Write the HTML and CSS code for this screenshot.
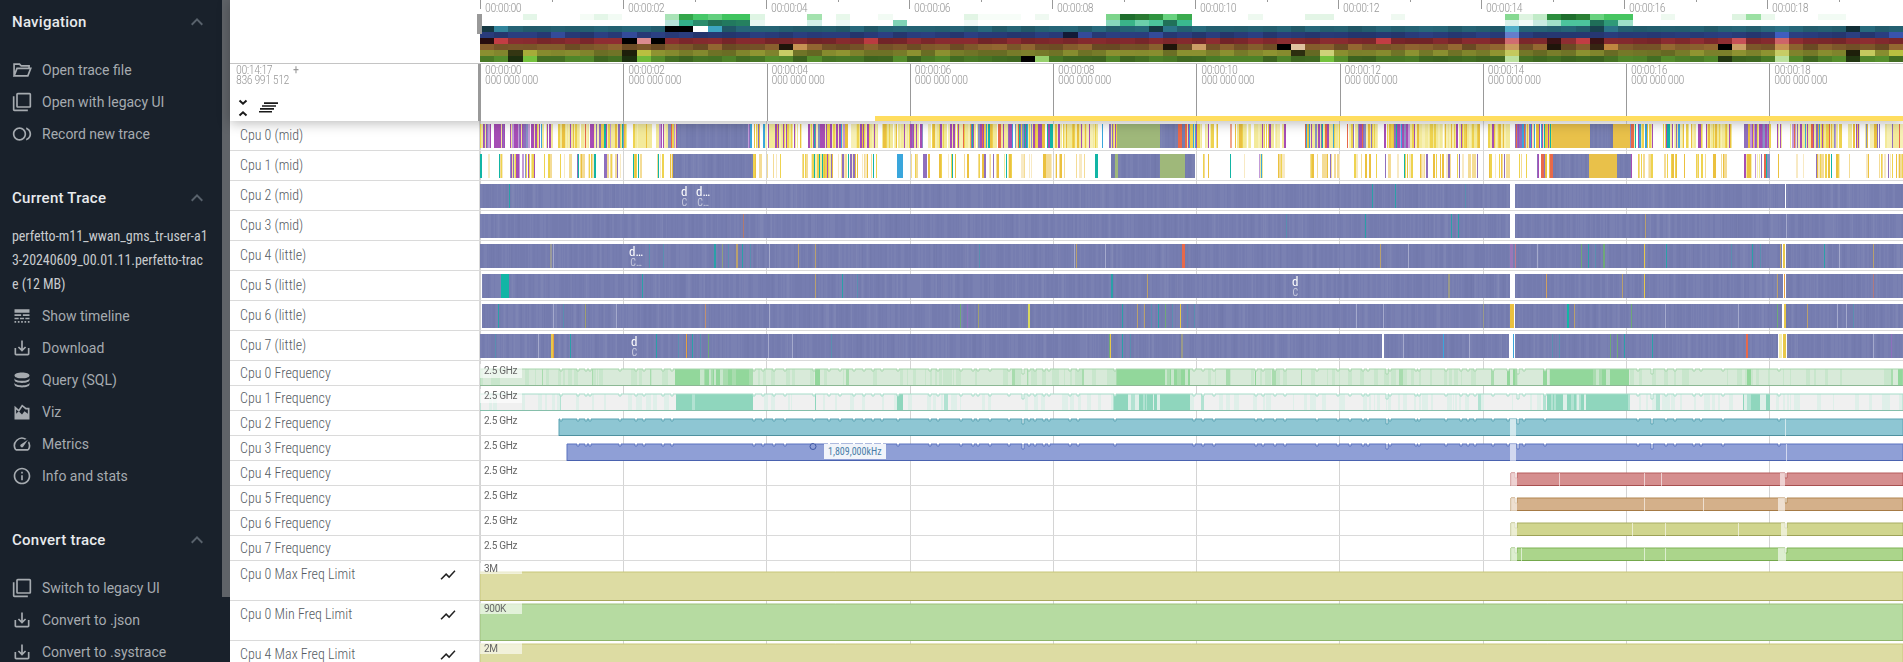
FILE: index.html
```html
<!DOCTYPE html>
<html lang="en">

<head>
    <meta charset="UTF-8">
    <title>Perfetto UI</title>
    <link rel="stylesheet" href="styles.css">
</head>

<body>
    <aside class="sidebar">
        <section class="nav-section">
            <header class="nav-head">
                <h1>Navigation</h1>
                <svg class="chevron" viewBox="0 0 24 24"><path d="M12 8l-6 6 1.41 1.41L12 10.83l4.59 4.58L18 14z"/></svg>
            </header>
            <ul class="nav-items">
                <li><svg class="icon" viewBox="0 0 24 24"><path class="line" d="M2.5 19V5h6.5l2 2h9.500v3M2.500 19l3.500-9h16.500l-3.500 9z"/></svg><span>Open trace file</span></li>
                <li><svg class="icon" viewBox="0 0 24 24"><path d="M3 5H1v16c0 1.100.9 2 2 2h16v-2H3V5zm18-4H7c-1.100 0-2 .9-2 2v14c0 1.100.9 2 2 2h14c1.100 0 2-.9 2-2V3c0-1.100-.9-2-2-2zm0 16H7V3h14v14z"/></svg><span>Open with legacy UI</span></li>
                <li><svg class="icon" viewBox="0 0 24 24"><path d="M9 4c-4.420 0-8 3.580-8 8s3.580 8 8 8 8-3.580 8-8-3.580-8-8-8zm0 14c-3.310 0-6-2.690-6-6s2.690-6 6-6 6 2.690 6 6-2.690 6-6 6zm8-13.740v2.090c2.330.82 4 3.040 4 5.650s-1.670 4.830-4 5.650v2.090c3.450-.89 6-4.010 6-7.740s-2.550-6.850-6-7.740z"/></svg><span>Record new trace</span></li>
            </ul>
        </section>

        <section class="nav-section">
            <header class="nav-head">
                <h1>Current Trace</h1>
                <svg class="chevron" viewBox="0 0 24 24"><path d="M12 8l-6 6 1.41 1.41L12 10.83l4.59 4.58L18 14z"/></svg>
            </header>
            <div class="trace-title">perfetto-m11_wwan_gms_tr-user-a1<br>3-20240609_00.01.11.perfetto-trac<br>e (12 MB)</div>
            <ul class="nav-items">
                <li><svg class="icon" viewBox="0 0 24 24"><path d="M3 16h5v-2H3v2zm6.500 0h5v-2h-5v2zm6.500 0h5v-2h-5v2zM3 20h2v-2H3v2zm4 0h2v-2H7v2zm4 0h2v-2h-2v2zm4 0h2v-2h-2v2zm4 0h2v-2h-2v2zM3 12h8v-2H3v2zm10 0h8v-2h-8v2zM3 4v4h18V4H3z"/></svg><span>Show timeline</span></li>
                <li><svg class="icon" viewBox="0 0 24 24"><path d="M19 12v7H5v-7H3v7c0 1.100.9 2 2 2h14c1.100 0 2-.9 2-2v-7h-2zm-6 .67l2.590-2.580L17 11.500l-5 5-5-5 1.410-1.410L11 12.670V3h2z"/></svg><span>Download</span></li>
                <li><svg class="icon" viewBox="0 0 24 24"><path d="M12 3c-5 0-9 1.500-9 3.500S7 10 12 10s9-1.500 9-3.500S17 3 12 3zM3 9.500V12c0 2 4 3.500 9 3.500s9-1.500 9-3.500V9.500c0 2-4 3.500-9 3.500s-9-1.500-9-3.500zM3 15v2.500C3 19.500 7 21 12 21s9-1.500 9-3.500V15c0 2-4 3.500-9 3.500S3 17 3 15z"/></svg><span>Query (SQL)</span></li>
                <li><svg class="icon" viewBox="0 0 24 24"><path fill-rule="evenodd" d="M3 21V4.500l5 4.500 4-6 5 4h4v14zM5 9v5l3-3 4 4 3-4 4 3V9h-2.700L12.500 5.800 8.400 12z"/></svg><span>Viz</span></li>
                <li><svg class="icon" viewBox="0 0 24 24"><path d="M20.380 8.570l-1.230 1.850a8 8 0 0 1-.22 7.580H5.070A8 8 0 0 1 15.580 6.850l1.850-1.230A10 10 0 0 0 3.350 19a2 2 0 0 0 1.720 1h13.850a2 2 0 0 0 1.740-1 10 10 0 0 0-.27-10.440zM10.590 15.410a2 2 0 0 0 2.830 0l5.660-8.490-8.490 5.660a2 2 0 0 0 0 2.830z"/></svg><span>Metrics</span></li>
                <li><svg class="icon" viewBox="0 0 24 24"><path d="M11 7h2v2h-2zm0 4h2v6h-2zm1-9C6.480 2 2 6.480 2 12s4.480 10 10 10 10-4.480 10-10S17.520 2 12 2zm0 18c-4.410 0-8-3.590-8-8s3.590-8 8-8 8 3.590 8 8-3.590 8-8 8z"/></svg><span>Info and stats</span></li>
            </ul>
        </section>

        <section class="nav-section">
            <header class="nav-head">
                <h1>Convert trace</h1>
                <svg class="chevron" viewBox="0 0 24 24"><path d="M12 8l-6 6 1.41 1.41L12 10.83l4.59 4.58L18 14z"/></svg>
            </header>
            <ul class="nav-items">
                <li><svg class="icon" viewBox="0 0 24 24"><path d="M3 5H1v16c0 1.100.9 2 2 2h16v-2H3V5zm18-4H7c-1.100 0-2 .9-2 2v14c0 1.100.9 2 2 2h14c1.100 0 2-.9 2-2V3c0-1.100-.9-2-2-2zm0 16H7V3h14v14z"/></svg><span>Switch to legacy UI</span></li>
                <li><svg class="icon" viewBox="0 0 24 24"><path d="M19 12v7H5v-7H3v7c0 1.100.9 2 2 2h14c1.100 0 2-.9 2-2v-7h-2zm-6 .67l2.590-2.580L17 11.500l-5 5-5-5 1.410-1.410L11 12.670V3h2z"/></svg><span>Convert to .json</span></li>
                <li><svg class="icon" viewBox="0 0 24 24"><path d="M19 12v7H5v-7H3v7c0 1.100.9 2 2 2h14c1.100 0 2-.9 2-2v-7h-2zm-6 .67l2.590-2.580L17 11.500l-5 5-5-5 1.410-1.410L11 12.670V3h2z"/></svg><span>Convert to .systrace</span></li>
            </ul>
        </section>
    </aside>

    <div class="sidebar-scroll"><div class="sidebar-thumb"></div></div>

    <main class="viewer">
        <div class="topbar">
            <div class="overview">
                <div class="corner"></div>
                <div class="overview-body">
                    <div class="overview-handle"></div>
                    <div class="overview-ticks">
                        <div class="overview-tick">00:00:00</div>
                        <div class="overview-tick">00:00:02</div>
                        <div class="overview-tick">00:00:04</div>
                        <div class="overview-tick">00:00:06</div>
                        <div class="overview-tick">00:00:08</div>
                        <div class="overview-tick">00:00:10</div>
                        <div class="overview-tick">00:00:12</div>
                        <div class="overview-tick">00:00:14</div>
                        <div class="overview-tick">00:00:16</div>
                        <div class="overview-tick">00:00:18</div>
                    </div>
                    <canvas id="heatmap" class="heatmap"></canvas>
                </div>
            </div>
            <div class="timeline">
                <div class="time-left">
                    <div class="offset-row">
                        <div class="time-text">00:14:17<br>836 991 512</div>
                        <div class="offset-plus">+</div>
                    </div>
                    <div class="time-tools">
                        <svg class="tool-collapse" viewBox="0 0 10 18"><path d="M1.500 1.500L5 4.700l3.500-3.200M1.500 16.500L5 13.300l3.500 3.200"/></svg>
                        <svg class="tool-list" viewBox="0 0 19 11"><path d="M5 1.100h14M3 4h14M1 6.900h14M0 9.800h13"/></svg>
                    </div>
                </div>
                <div class="time-ticks">
                    <div class="time-tick">00:00:00<br>000 000 000</div>
                    <div class="time-tick">00:00:02<br>000 000 000</div>
                    <div class="time-tick">00:00:04<br>000 000 000</div>
                    <div class="time-tick">00:00:06<br>000 000 000</div>
                    <div class="time-tick">00:00:08<br>000 000 000</div>
                    <div class="time-tick">00:00:10<br>000 000 000</div>
                    <div class="time-tick">00:00:12<br>000 000 000</div>
                    <div class="time-tick">00:00:14<br>000 000 000</div>
                    <div class="time-tick">00:00:16<br>000 000 000</div>
                    <div class="time-tick">00:00:18<br>000 000 000</div>
                    <div class="selection-bar"></div>
                </div>
            </div>
        </div>

        <div class="tracks">
            <div class="track cpu"><div class="track-name">Cpu 0 (mid)</div><div class="track-body"><canvas data-track="cpu0"></canvas></div></div>
            <div class="track cpu"><div class="track-name">Cpu 1 (mid)</div><div class="track-body"><canvas data-track="cpu1"></canvas></div></div>
            <div class="track cpu"><div class="track-name">Cpu 2 (mid)</div><div class="track-body"><canvas data-track="cpu2"></canvas></div></div>
            <div class="track cpu"><div class="track-name">Cpu 3 (mid)</div><div class="track-body"><canvas data-track="cpu3"></canvas></div></div>
            <div class="track cpu"><div class="track-name">Cpu 4 (little)</div><div class="track-body"><canvas data-track="cpu4"></canvas></div></div>
            <div class="track cpu"><div class="track-name">Cpu 5 (little)</div><div class="track-body"><canvas data-track="cpu5"></canvas></div></div>
            <div class="track cpu"><div class="track-name">Cpu 6 (little)</div><div class="track-body"><canvas data-track="cpu6"></canvas></div></div>
            <div class="track cpu"><div class="track-name">Cpu 7 (little)</div><div class="track-body"><canvas data-track="cpu7"></canvas></div></div>

            <div class="track freq"><div class="track-name">Cpu 0 Frequency</div><div class="track-body"><canvas data-track="freq0"></canvas><div class="counter-label boxed">2.5 GHz</div></div></div>
            <div class="track freq"><div class="track-name">Cpu 1 Frequency</div><div class="track-body"><canvas data-track="freq1"></canvas><div class="counter-label boxed">2.5 GHz</div></div></div>
            <div class="track freq"><div class="track-name">Cpu 2 Frequency</div><div class="track-body"><canvas data-track="freq2"></canvas><div class="counter-label">2.5 GHz</div></div></div>
            <div class="track freq"><div class="track-name">Cpu 3 Frequency</div><div class="track-body"><canvas data-track="freq3"></canvas><div class="counter-label">2.5 GHz</div><div class="freq-tooltip">1,809,000kHz</div></div></div>
            <div class="track freq"><div class="track-name">Cpu 4 Frequency</div><div class="track-body"><canvas data-track="freq4"></canvas><div class="counter-label">2.5 GHz</div></div></div>
            <div class="track freq"><div class="track-name">Cpu 5 Frequency</div><div class="track-body"><canvas data-track="freq5"></canvas><div class="counter-label">2.5 GHz</div></div></div>
            <div class="track freq"><div class="track-name">Cpu 6 Frequency</div><div class="track-body"><canvas data-track="freq6"></canvas><div class="counter-label">2.5 GHz</div></div></div>
            <div class="track freq"><div class="track-name">Cpu 7 Frequency</div><div class="track-body"><canvas data-track="freq7"></canvas><div class="counter-label">2.5 GHz</div></div></div>

            <div class="track limit"><div class="track-name"><span>Cpu 0 Max Freq Limit</span><svg class="chart-icon" viewBox="0 0 24 24"><path d="M3.500 18.490l6-6.010 4 4L22 6.920l-1.410-1.410-7.090 7.970-4-4L2 16.990z"/></svg></div><div class="track-body"><canvas data-track="limit0"></canvas><div class="counter-label limit-label">3M</div></div></div>
            <div class="track limit"><div class="track-name"><span>Cpu 0 Min Freq Limit</span><svg class="chart-icon" viewBox="0 0 24 24"><path d="M3.500 18.490l6-6.010 4 4L22 6.920l-1.410-1.410-7.090 7.970-4-4L2 16.990z"/></svg></div><div class="track-body"><canvas data-track="limit1"></canvas><div class="counter-label limit-label">900K</div></div></div>
            <div class="track limit"><div class="track-name"><span>Cpu 4 Max Freq Limit</span><svg class="chart-icon" viewBox="0 0 24 24"><path d="M3.500 18.490l6-6.010 4 4L22 6.920l-1.410-1.410-7.090 7.970-4-4L2 16.990z"/></svg></div><div class="track-body"><canvas data-track="limit2"></canvas><div class="counter-label limit-label">2M</div></div></div>
        </div>
    </main>

    <script src="tracks.js"></script>
</body>

</html>
```

FILE: styles.css
```css
html,
body {
    margin: 0;
    padding: 0;
    height: 100%;
    overflow: hidden;
    font-family: Roboto, sans-serif;
}

body {
    display: flex;
    background-color: white;
}

/* sidebar */

.sidebar {
    width: 222px;
    flex: none;
    overflow: hidden;
    background-color: #19212b;
    color: #a6abb0;
    font-size: 14px;
}

.nav-section {
    margin-bottom: 26px;
}

.nav-head {
    height: 44px;
    padding: 0 13px 0 12px;
    display: flex;
    align-items: center;
    justify-content: space-between;
}

.nav-head h1 {
    margin: 0;
    font-size: 15px;
    font-weight: 500;
    letter-spacing: 0.25px;
    color: #e8eaed;
}

.chevron {
    width: 24px;
    height: 24px;
    fill: #59626c;
}

.nav-items {
    list-style: none;
    margin: 10px 0 0;
    padding: 0;
}

.trace-title + .nav-items {
    margin-top: 4px;
}

.nav-items li {
    height: 32px;
    padding-left: 12px;
    display: flex;
    align-items: center;
    gap: 10px;
}

.icon {
    width: 20px;
    height: 20px;
    flex: none;
    fill: #a6abb0;
}

.icon .line {
    fill: none;
    stroke: #a6abb0;
    stroke-width: 2;
}

.trace-title {
    margin-top: 4px;
    padding-left: 12px;
    font-family: "Roboto Condensed", "Liberation Sans Narrow", Roboto, sans-serif;
    font-size: 14px;
    line-height: 24px;
    letter-spacing: -0.05px;
    color: #c8cbce;
    white-space: nowrap;
}

.sidebar-scroll {
    width: 8px;
    flex: none;
    background-color: #19212b;
}

.sidebar-thumb {
    height: 597px;
    background-color: #5f6368;
}

/* viewer */

.viewer {
    flex: 1;
    min-width: 0;
    display: flex;
    flex-direction: column;
    font-family: "Roboto Condensed", "Liberation Sans Narrow", Roboto, sans-serif;
}

.topbar {
    height: 121px;
    flex: none;
    position: relative;
    z-index: 2;
    background-color: white;
    box-shadow: 0 2px 12px rgba(0, 0, 0, 0.28);
}

.overview {
    height: 64px;
    box-sizing: border-box;
    display: flex;
    border-bottom: 1px solid #c4c4c4;
}

.corner {
    width: 250px;
    flex: none;
}

.overview-body {
    flex: 1;
    min-width: 0;
    position: relative;
}

.overview-handle {
    position: absolute;
    left: -3px;
    top: 14px;
    width: 5px;
    height: 20px;
    background-color: #999;
    z-index: 1;
}

.overview-ticks {
    height: 14px;
    display: flex;
    overflow: hidden;
}

.overview-tick {
    width: 143px;
    flex: none;
    box-sizing: border-box;
    position: relative;
    padding-left: 5px;
    font-size: 12px;
    font-weight: 300;
    letter-spacing: -0.45px;
    line-height: 16px;
    color: #999;
}

.overview-tick::before,
.overview-tick::after {
    content: "";
    position: absolute;
    top: 0;
    width: 1px;
    background-color: #999;
}

.overview-tick::before {
    left: 0;
    height: 9px;
}

.overview-tick::after {
    left: 50%;
    height: 2px;
}

.heatmap {
    display: block;
    width: 100%;
    height: 49px;
}

.timeline {
    height: 57px;
    display: flex;
}

.time-left {
    width: 250px;
    flex: none;
    box-sizing: border-box;
    padding: 1px 0 0 6px;
    border-right: 2px solid #999;
    display: flex;
    flex-direction: column;
    justify-content: space-between;
}

.offset-row {
    display: flex;
    gap: 4px;
}

.time-text,
.time-tick {
    font-size: 12px;
    font-weight: 300;
    letter-spacing: -0.45px;
    line-height: 10px;
    color: #999;
}

.offset-plus {
    font-size: 12px;
    line-height: 11px;
    color: #999;
}

.time-tools {
    height: 22px;
    padding-left: 2px;
    display: flex;
    align-items: flex-start;
    gap: 11px;
}

.tool-collapse {
    width: 10px;
    height: 18px;
    fill: none;
    stroke: #1a1a1a;
    stroke-width: 2;
}

.tool-list {
    width: 19px;
    height: 11px;
    margin-top: 3px;
    stroke: #1a1a1a;
    stroke-width: 1.6;
}

.time-ticks {
    flex: 1;
    min-width: 0;
    display: flex;
    overflow: hidden;
    position: relative;
}

.time-tick {
    width: 143.25px;
    flex: none;
    box-sizing: border-box;
    padding: 1px 0 0 4px;
    border-left: 1px solid #999;
}

.selection-bar {
    position: absolute;
    left: 395px;
    right: 0;
    bottom: 0;
    height: 5px;
    background-color: #ffdd5f;
}

/* tracks */

.tracks {
    flex: 1;
    min-height: 0;
    overflow: hidden;
}

.track {
    display: flex;
}

.track.cpu {
    height: 30px;
}

.track.freq {
    height: 25px;
}

.track.limit {
    height: 40px;
}

.track-name {
    width: 250px;
    flex: none;
    box-sizing: border-box;
    padding: 0 22px 0 10px;
    display: flex;
    align-items: center;
    justify-content: space-between;
    font-size: 14px;
    font-weight: 300;
    color: #555b62;
    border-bottom: 1px solid #dadada;
    border-right: 1px solid #dadada;
}

.cpu .track-name {
    padding-bottom: 2px;
}

.limit .track-name {
    align-items: flex-start;
    padding-top: 5px;
}

.chart-icon {
    width: 18px;
    height: 18px;
    flex: none;
    fill: #222;
}

.track-body {
    flex: 1;
    min-width: 0;
    position: relative;
    background-image:
        linear-gradient(#dadada, #dadada),
        repeating-linear-gradient(to right, #d4d4d4 0, #d4d4d4 1px, transparent 1px, transparent 143.25px);
    background-size: 100% 1px, 100% 100%;
    background-position: left bottom, left top;
    background-repeat: no-repeat;
}

.track-body canvas {
    display: block;
    width: 100%;
    height: 100%;
}

.counter-label {
    position: absolute;
    left: 0;
    top: 3px;
    width: 42px;
    box-sizing: border-box;
    padding-left: 4px;
    font-size: 10px;
    letter-spacing: -0.3px;
    line-height: 14px;
    font-family: Roboto, sans-serif;
    color: #666;
}

.counter-label.boxed {
    background-color: rgba(255, 255, 255, 0.6);
}

.limit-label {
    top: 2px;
    height: 11px;
    line-height: 11px;
    background-color: rgba(255, 255, 255, 0.6);
}

.freq-tooltip {
    position: absolute;
    left: 344px;
    top: 8px;
    width: 62px;
    box-sizing: border-box;
    padding-left: 4px;
    font-size: 10px;
    line-height: 15px;
    background-color: #f1f4fa;
    color: #4a7ea8;
}

.slice-label {
    position: absolute;
    top: 5px;
    font-size: 13px;
    line-height: 11px;
    color: white;
    text-align: center;
}

.slice-label small {
    display: block;
    font-size: 10px;
    color: rgba(255, 255, 255, 0.6);
}
```

FILE: tracks.js
```js
(function () {
    var LEFT = 480,
        BLUE = "#767db0",
        seed = 4711

    function rnd() {
        seed = (seed * 16807) % 2147483647
        return seed / 2147483647
    }

    function pick(list) {
        return list[Math.floor(rnd() * list.length)]
    }

    function setup(canvas) {
        canvas.width = canvas.clientWidth
        canvas.height = canvas.clientHeight
        return canvas.getContext("2d")
    }

    // ---- overview heat map

    var topRows = [
        { 3: "#e4f6e8", 7: "#f5fcf6", 8: "#e4f6e8", 9: "#f2fbf4", 13: "#a9e3b7", 14: "#33a64b", 15: "#46c869", 16: "#62cf7e", 17: "#3fc45f", 18: "#3fc45f", 19: "#dff5e4", 23: "#a3e2ae", 25: "#e8f8eb", 28: "#f2fbf4", 34: "#e2f5e5", 35: "#f7fdf8", 36: "#f7fdf8", 37: "#f7fdf8", 39: "#eff9f1", 44: "#7cd48b", 45: "#1f6e2e", 46: "#2a7a33", 47: "#2f9440", 48: "#68d27f", 49: "#3aab4e", 54: "#eef9f0", 58: "#e3f5e6", 59: "#e3f5e6", 64: "#eff9f1", 72: "#86d992", 73: "#def4e1", 74: "#c1ebc8", 75: "#2b8d3d", 76: "#1f6e2e", 77: "#2a8035", 78: "#68d27f", 79: "#46c561", 80: "#46c561", 83: "#eef9f0", 88: "#def4e1", 89: "#9be0a3", 90: "#eaf8ec", 94: "#f2fbf4", 95: "#f2fbf4" },
        { 13: "#b6e2d8", 14: "#33b08a", 15: "#2a8b6c", 16: "#226f57", 17: "#22795f", 18: "#25805f", 19: "#e8f7f2", 23: "#d3f0e8", 25: "#eef9f6", 29: "#80d4b6", 34: "#f0faf7", 44: "#87d6bb", 45: "#3ab489", 46: "#6ccfab", 47: "#4cc49c", 48: "#207059", 49: "#3ab88f", 72: "#d9f1eb", 73: "#f2fbf8", 74: "#c8ebe1", 75: "#a0e0c8", 76: "#4cc49c", 77: "#4cc49c", 78: "#1f6e58", 79: "#2f9a78", 80: "#9ee0c8" }
    ]

    // hue, saturation, base lightness, spread
    var heatRows = [
        [193, 52, 29, 3],
        [226, 50, 31, 3],
        [357, 52, 33, 4],
        [33, 50, 33, 6],
        [63, 50, 33, 6],
        [95, 52, 31, 6]
    ]

    // column -> lightness per row, null keeps the random value
    var heatSpikes = {
        0: [17, null, 10], 1: [40, null, 50], 2: [null, null, null, null, 14, 12], 3: [null, null, null, null, 45, 50],
        5: [null, 40], 10: [null, 40, 0, 28, 8, 12], 11: [null, null, 70, null, 50, 48], 12: [null, null, 0],
        13: [0], 14: [0], 15: [100], 16: [50], 21: [null, null, null, 8, 60], 22: [null, null, null, 55],
        27: [null, null, 48], 38: [null, null, null, null, null, 0], 39: [null, null, null, null, null, 62],
        41: [null, 14], 42: [null, 40], 47: [17, 40], 48: [35, null, null, 8], 50: [null, null, null, 60],
        56: [null, null, null, 0], 57: [null, null, null, 75, 12], 59: [null, null, null, null, 65, 50],
        63: [null, null, 50], 72: [55, 60, 62, 58, 58, 75], 75: [null, null, 15, 8], 77: [null, null, 50],
        78: [20, null, 15, 14], 79: [35, null, null, 50], 87: [null, null, null, 0, null, 14], 88: [null, null, 55, 60],
        91: [34, 50, 60, 55, 60, 75], 96: [14, null, null, null, 8, 14], 97: [32, null, null, null, 58], 99: [null, 45, null, null, 50]
    }

    function drawHeatmap() {
        var canvas = document.getElementById("heatmap"),
            ctx = setup(canvas),
            w = canvas.width / 100

        for (var col = 0; col < 100; col++) {
            var x = Math.round(col * w),
                cellW = Math.round((col + 1) * w) - x

            topRows.forEach((row, i) => {
                if (row[col]) {
                    ctx.fillStyle = row[col]
                    ctx.fillRect(x, i * 6, cellW, 6)
                }
            })

            heatRows.forEach((row, i) => {
                var light = row[2] + (rnd() - 0.5) * 2 * row[3],
                    spike = heatSpikes[col]
                if (spike && spike[i] != null) light = spike[i]
                ctx.fillStyle = `hsl(${row[0]},${row[1]}%,${light}%)`
                ctx.fillRect(x, 12 + i * 6, cellW, 6)
            })
        }
    }

    // ---- cpu slices

    var Y = "#f3ea9a", W = "#f7f0b5", YY = "#eed34f", O = "#ebc13f", PALE = "#f4dc96", C = "#f8eac4", P = "#a64db5", V = "#8f6fbd",
        L = "#c39bd9", B = "#3aa6dc", T = "#12b5a5", R = "#e8694a", F = "#f1a58c", I = "#8a91c4"

    var palettes = {
        y: [Y, Y, Y, Y, W, W, YY, YY, O, P],
        p: [P, P, P, V, L, YY, Y, I],
        m: [Y, Y, Y, Y, W, W, YY, YY, O, P, P, V, B, L, I, T, R],
        s: [O, O, O, PALE, PALE, PALE, PALE, PALE, C, C, C, YY, YY, T, V],
        r: [R, R, V, V, P, O, B]
    }

    // x0, x1, density, palette; "b" and "g" and "o" are solid runs
    var cpu0Runs = [
        [480, 505, 0.95, "p"], [510, 538, 0.95, "p"], [538, 553, 0.8, "m"], [558, 580, 0.9, "y"], [580, 627, 0.95, "m"],
        [633, 652, 1, "y"], [656, 677, 0.85, "m"], [677, 748, 1, "b"], [748, 767, 0.9, "m"], [768, 803, 0.9, "y"],
        [808, 848, 1, "m"], [851, 910, 0.9, "y"], [910, 923, 0.9, "p"], [928, 960, 0.85, "y"], [960, 1053, 0.9, "m"],
        [1053, 1098, 0.9, "y"], [1102, 1103, 1, "B"], [1109, 1117, 1, "m"], [1117, 1160, 1, "g"], [1160, 1178, 1, "b"],
        [1178, 1182, 1, "R"], [1182, 1185, 1, "b"], [1185, 1197, 1, "m"], [1197, 1218, 0.8, "y"], [1230, 1232, 1, "F"],
        [1235, 1247, 0.9, "y"], [1248, 1287, 0.9, "y"], [1305, 1340, 1, "m"], [1347, 1378, 0.85, "m"], [1384, 1410, 0.9, "m"],
        [1410, 1480, 0.85, "y"], [1488, 1510, 0.95, "y"], [1515, 1525, 1, "r"], [1525, 1552, 0.95, "m"], [1552, 1590, 1, "o"],
        [1590, 1613, 1, "b"], [1613, 1630, 1, "o"], [1630, 1653, 0.85, "m"], [1663, 1680, 0.9, "m"], [1680, 1732, 0.9, "y"],
        [1744, 1750, 1, "r"], [1750, 1771, 1, "p"], [1777, 1782, 0.8, "y"], [1790, 1842, 0.9, "m"], [1847, 1860, 0.85, "y"],
        [1865, 1880, 0.85, "m"], [1885, 1903, 0.9, "m"]
    ]

    var cpu1Runs = [
        [480, 482, 1, "T"], [487, 490, 0.5, "s"], [495, 503, 0.6, "s"], [510, 535, 0.8, "p"], [543, 553, 0.5, "s"],
        [558, 572, 0.55, "s"], [577, 597, 0.7, "s"], [603, 622, 0.55, "s"], [633, 647, 0.5, "s"], [657, 664, 0.6, "s"],
        [670, 673, 1, "s"], [673, 753, 1, "b"], [753, 763, 0.6, "s"], [767, 787, 0.3, "s"], [800, 812, 0.7, "s"],
        [812, 833, 0.9, "m"], [838, 858, 0.5, "s"], [862, 887, 0.4, "s"], [897, 903, 1, "B"], [911, 930, 0.5, "s"],
        [937, 972, 0.35, "s"], [978, 1000, 0.4, "s"], [1004, 1012, 0.6, "m"], [1017, 1038, 0.5, "s"], [1042, 1053, 0.7, "s"],
        [1055, 1085, 0.3, "s"], [1095, 1098, 1, "T"], [1111, 1115, 1, "b"], [1115, 1118, 1, "g"], [1118, 1160, 1, "b"],
        [1160, 1185, 1, "g"], [1185, 1195, 1, "b"], [1202, 1215, 0.45, "s"], [1230, 1231, 1, "T"], [1237, 1245, 0.5, "s"],
        [1253, 1267, 0.5, "m"], [1272, 1287, 0.4, "s"], [1309, 1340, 0.65, "s"], [1347, 1378, 0.3, "s"], [1384, 1400, 0.4, "s"],
        [1403, 1478, 0.35, "s"], [1489, 1510, 0.6, "s"], [1515, 1527, 0.3, "s"], [1537, 1553, 0.8, "r"], [1553, 1589, 1, "b"],
        [1589, 1617, 1, "o"], [1617, 1631, 1, "b"], [1631, 1632, 1, "P"], [1637, 1653, 0.3, "s"], [1664, 1677, 0.6, "s"],
        [1684, 1707, 0.6, "s"], [1713, 1727, 0.4, "s"], [1744, 1770, 0.6, "m"], [1778, 1779, 1, "O"], [1793, 1830, 0.5, "s"],
        [1831, 1840, 0.5, "s"], [1848, 1853, 0.6, "s"], [1866, 1870, 0.5, "s"], [1873, 1903, 0.45, "s"]
    ]

    var solids = { b: null, g: "#9fb87a", o: "#e9c14a", B: B, T: T, R: R, F: F, P: P, O: O }

    function fillBlue(ctx, x0, x1, h) {
        ctx.fillStyle = BLUE
        ctx.fillRect(x0 - LEFT, 3, x1 - x0, h)
        for (var x = x0; x < x1; x += 1 + Math.floor(rnd() * 4)) {
            ctx.fillStyle = rnd() < 0.5 ? "rgba(255,255,255,0.035)" : "rgba(60,60,120,0.025)"
            ctx.fillRect(x - LEFT, 3, 1 + Math.floor(rnd() * 3), h)
        }
    }

    function drawBusy(ctx, runs) {
        runs.forEach((run) => {
            var kind = run[3]
            if (kind in solids) {
                if (kind == "b") {
                    fillBlue(ctx, run[0], run[1], 24)
                } else {
                    ctx.fillStyle = solids[kind]
                    ctx.fillRect(run[0] - LEFT, 3, run[1] - run[0], 24)
                }
                return
            }
            for (var x = run[0]; x < run[1];) {
                var w = 1 + Math.floor(rnd() * rnd() * 3)
                if (rnd() < run[2]) {
                    ctx.fillStyle = pick(palettes[kind])
                    ctx.fillRect(x - LEFT, 3, Math.min(w, run[1] - x), 24)
                }
                x += w
            }
        })
    }

    var t = "#2aa0a8", d = "#5a8fb0", l = "#a4a9cc", n = "#b9a06e", y = "#e8c84a", g = "#6fa878"

    // start, gaps, [x, colour, width], labels
    var cpuTracks = {
        cpu2: {
            start: 480, gaps: [[1510, 1515], [1785, 1786]],
            stripes: [[509, t], [1372, t], [1395, t], [1465, d]],
            labels: [[681, "d", "C"], [696, "d…", "C…"]]
        },
        cpu3: {
            start: 480, gaps: [[1510, 1515]],
            stripes: [[743, "#b07a70"], [1286, d], [1365, t], [1451, t], [1458, t], [1645, n], [1786, l]]
        },
        cpu4: {
            start: 480, gaps: [[1782, 1786]],
            stripes: [[550, "#9a9a9a", 2], [553, l], [649, d], [663, d], [714, t, 2], [722, "#8fa080"], [728, d], [736, n, 2], [742, t], [750, d], [769, l], [798, n], [815, n], [979, d], [1074, l], [1076, n], [1105, l], [1182, R, 3], [1380, n], [1408, l], [1510, "#9a78b8", 3], [1515, "#c07a90"], [1537, l], [1581, g], [1588, t], [1595, d], [1603, g, 2], [1644, y], [1666, t], [1731, d], [1752, t], [1760, d], [1780, n], [1783, y, 2], [1824, t], [1839, l], [1873, n]],
            labels: [[629, "d…", "C…"]]
        },
        cpu5: {
            start: 482, gaps: [[1510, 1515], [1783, 1786]],
            stripes: [[501, T, 8], [642, t], [815, n], [842, t], [857, d], [1111, t, 2], [1147, n], [1448, "#9a9a8a", 2], [1546, "#d0a060"], [1622, n], [1644, y], [1777, n], [1784, "#e8a040"], [1873, "#b07a80"]],
            labels: [[1292, "d", "C"]]
        },
        cpu6: {
            start: 482, gaps: [[1514, 1515], [1782, 1786]],
            stripes: [[498, t], [553, l], [563, d], [585, "#a0a070"], [616, l], [705, "#c09070"], [769, l], [960, g], [967, "#8f6fbd"], [978, "#a0a070"], [1028, "#d8d860", 2], [1122, t], [1137, n], [1144, n], [1151, d], [1158, t], [1165, g], [1172, d], [1180, y], [1187, d], [1194, d], [1356, l], [1383, l], [1483, "#9a9a8a"], [1510, O, 4], [1567, T, 2], [1574, n], [1631, g], [1665, l], [1738, l], [1777, g], [1784, y, 2], [1807, n], [1837, l], [1846, l], [1853, d]]
        },
        cpu7: {
            start: 480, gaps: [[1382, 1384], [1509, 1515], [1778, 1787]],
            stripes: [[495, d], [538, l], [551, y, 2], [553, "#e8a040"], [570, t], [656, t], [678, d], [686, "#e8a040"], [692, t], [700, d], [708, g], [768, l], [792, l], [831, d], [1109, g], [1110, y], [1122, t], [1130, d], [1181, "#9a9a8a", 2], [1403, l], [1443, B], [1469, l], [1513, B], [1552, d], [1559, d], [1610, g], [1617, g], [1624, t], [1652, t], [1746, R, 2], [1779, "#f6eeb0", 3], [1783, y, 3], [1873, l], [1891, "#8f6fbd"]],
            labels: [[631, "d", "C"]]
        }
    }

    function drawCpu(canvas, track) {
        var ctx = setup(canvas)
        fillBlue(ctx, track.start, 1903, 24)
        track.stripes.forEach((s) => {
            ctx.fillStyle = s[1]
            ctx.fillRect(s[0] - LEFT, 3, s[2] || 1, 24)
        })
        track.gaps.forEach((g) => {
            ctx.clearRect(g[0] - LEFT, 3, g[1] - g[0], 24)
        })
        // a few late stripes sit inside gaps
        track.stripes.forEach((s) => {
            if (track.gaps.some((g) => s[0] >= g[0] && s[0] < g[1])) {
                ctx.fillStyle = s[1]
                ctx.fillRect(s[0] - LEFT, 3, s[2] || 1, 24)
            }
        })
        ;(track.labels || []).forEach((lab) => {
            var el = document.createElement("div")
            el.className = "slice-label"
            el.style.left = `${lab[0] - LEFT}px`
            el.innerHTML = `${lab[1]}<small>${lab[2]}</small>`
            canvas.parentNode.appendChild(el)
        })
    }

    // ---- counters

    var notches = [560, 577, 585, 589, 619, 635, 643, 662, 671, 753, 762, 773, 784, 813, 828, 839, 853, 863, 872, 881, 897, 929, 937, 960,
        972, 977, 989, 1008, 1022, 1028, 1034, 1043, 1048, 1069, 1077, 1114, 1193, 1202, 1213, 1255, 1262, 1274, 1284, 1316, 1337, 1349, 1362, 1367, 1386, 1389,
        1415, 1418, 1445, 1460, 1467, 1474, 1492, 1507, 1517, 1523, 1544, 1637, 1651, 1665, 1674, 1693, 1700, 1722, 1778]
    var deep = [1022, 1386, 1517, 1651]

    function counterPath(ctx, start, top, h, marks) {
        ctx.beginPath()
        ctx.moveTo(start - LEFT, h)
        ctx.lineTo(start - LEFT, top)
        marks.forEach((m) => {
            if (m < start) return
            var depth = deep.indexOf(m) >= 0 ? 5 : 2
            ctx.lineTo(m - LEFT, top)
            ctx.lineTo(m - LEFT, top + depth)
            ctx.lineTo(m - LEFT + 2, top + depth)
            ctx.lineTo(m - LEFT + 2, top)
        })
        ctx.lineTo(1903 - LEFT, top)
        ctx.lineTo(1903 - LEFT, h)
        ctx.closePath()
    }

    function paintBands(ctx, bands, top, h, darkColor, midColor, faintColor) {
        bands.forEach((band) => {
            for (var x = band[0]; x < band[1];) {
                var roll = rnd(), w = 1 + Math.floor(rnd() * 4)
                if (band[2] == 1) {
                    ctx.fillStyle = darkColor
                } else if (band[2] == 2) {
                    ctx.fillStyle = roll < 0.5 ? darkColor : roll < 0.8 ? midColor : faintColor
                } else {
                    ctx.fillStyle = roll < 0.03 ? midColor : roll < 0.28 ? faintColor : "rgba(0,0,0,0)"
                }
                ctx.fillRect(x - LEFT, top, Math.min(w, band[1] - x), h)
                x += w
            }
        })
    }

    function drawActivity(canvas, base, top, line, bottomLine, colors, bands) {
        var ctx = setup(canvas), h = canvas.height
        counterPath(ctx, LEFT, top, h, notches)
        ctx.save()
        ctx.clip()
        ctx.fillStyle = base
        ctx.fillRect(0, top, canvas.width, h - top)
        paintBands(ctx, [[480, 1903, 0]], top, h - top, colors[1], colors[1], colors[2])
        paintBands(ctx, bands, top, h - top, colors[0], colors[1], colors[2])
        ctx.restore()
        counterPath(ctx, LEFT, top, h, notches)
        ctx.strokeStyle = line
        ctx.lineWidth = 1
        ctx.stroke()
        ctx.fillStyle = bottomLine
        ctx.fillRect(0, h - 1, canvas.width, 1)
    }

    function drawFlat(canvas, start, top, fill, line, bottomLine, marks, pale) {
        var ctx = setup(canvas), h = canvas.height
        counterPath(ctx, start, top, h, marks)
        ctx.fillStyle = fill
        ctx.fill()
        ctx.strokeStyle = line
        ctx.lineWidth = 1
        ctx.stroke()
        ctx.fillStyle = bottomLine
        ctx.fillRect(start - LEFT, h - 1, 1903 - start, 1)
        ctx.fillStyle = "rgba(255,255,255,0.6)"
        pale.forEach((p) => {
            ctx.fillRect(p[0] - LEFT, top, p[1], h - top)
        })
        return ctx
    }

    // ---- draw everything

    drawHeatmap()

    document.querySelectorAll("canvas[data-track]").forEach((canvas) => {
        var name = canvas.dataset.track
        if (name == "cpu0") {
            drawBusy(setup(canvas), cpu0Runs)
        } else if (name == "cpu1") {
            drawBusy(setup(canvas), cpu1Runs)
        } else if (cpuTracks[name]) {
            drawCpu(canvas, cpuTracks[name])
        }
    })

    function track(name) {
        return document.querySelector(`canvas[data-track=${name}]`)
    }

    drawActivity(track("freq0"), "#d8ead9", 8, "#a6d6ac", "#8cb894", ["#92d79b", "#a8dcae", "#c8e6cc"],
        [[675, 700, 1], [700, 753, 2], [815, 820, 1], [1112, 1117, 2], [1117, 1165, 1], [1165, 1190, 2], [1255, 1256, 1], [1507, 1510, 1], [1513, 1518, 2], [1543, 1547, 1], [1550, 1590, 1], [1590, 1613, 2], [1613, 1629, 1], [1747, 1751, 1], [1898, 1903, 1]])

    drawActivity(track("freq1"), "#f0f0f0", 8, "#a6dcc9", "#86bfab", ["#8fd6bd", "#b2e2d2", "#dfefe9"],
        [[676, 687, 1], [687, 695, 2], [695, 753, 1], [815, 816, 1], [897, 903, 1], [1113, 1160, 2], [1160, 1190, 1], [1547, 1588, 2], [1588, 1617, 1], [1617, 1630, 2], [1743, 1770, 2]])

    drawFlat(track("freq2"), 559, 8, "#8ec6d3", "#5ba3b3", "#4f919f", notches, [[1510, 6], [1785, 1]])

    var freq3 = drawFlat(track("freq3"), 567, 8, "#8f9fd6", "#5a72bf", "#4a62af", notches, [[1510, 6], [1786, 1]])
    freq3.beginPath()
    freq3.arc(813 - LEFT, 10.5, 3, 0, Math.PI * 2)
    freq3.strokeStyle = "#3f57a5"
    freq3.lineWidth = 1
    freq3.fillStyle = "#8f9fd6"
    freq3.fill()
    freq3.stroke()

    var littleMarks = [1515, 1785]
    deep.push(1515, 1785)
    ;[
        ["freq4", "#d58e8e", "#b75d5d", "#a85050", [[1559, 1], [1644, 1], [1661, 1], [1780, 5]]],
        ["freq5", "#d4b08a", "#b28650", "#a67a45", [[1644, 1], [1703, 1], [1778, 7]]],
        ["freq6", "#d0d58e", "#a8ad62", "#9da258", [[1632, 1], [1665, 1], [1738, 1], [1781, 6]]],
        ["freq7", "#abd58b", "#7eb355", "#74a84c", [[1521, 1], [1644, 1], [1665, 1], [1778, 8]]]
    ].forEach((row) => {
        drawFlat(track(row[0]), 1511, 12, row[1], row[2], row[3], littleMarks, [[1511, 6]].concat(row[4]))
    })

    function drawLimit(name, top, fill, line, bottomLine) {
        drawFlat(track(name), LEFT, top, fill, line, bottomLine, [], [])
    }

    drawLimit("limit0", 11, "#dddca3", "#c8c67a", "#aaa85e")
    drawLimit("limit1", 3, "#b6dba1", "#9dc07a", "#8fb36a")
    drawLimit("limit2", 3, "#dddca3", "#c8c67a", "#aaa85e")
})()
```
